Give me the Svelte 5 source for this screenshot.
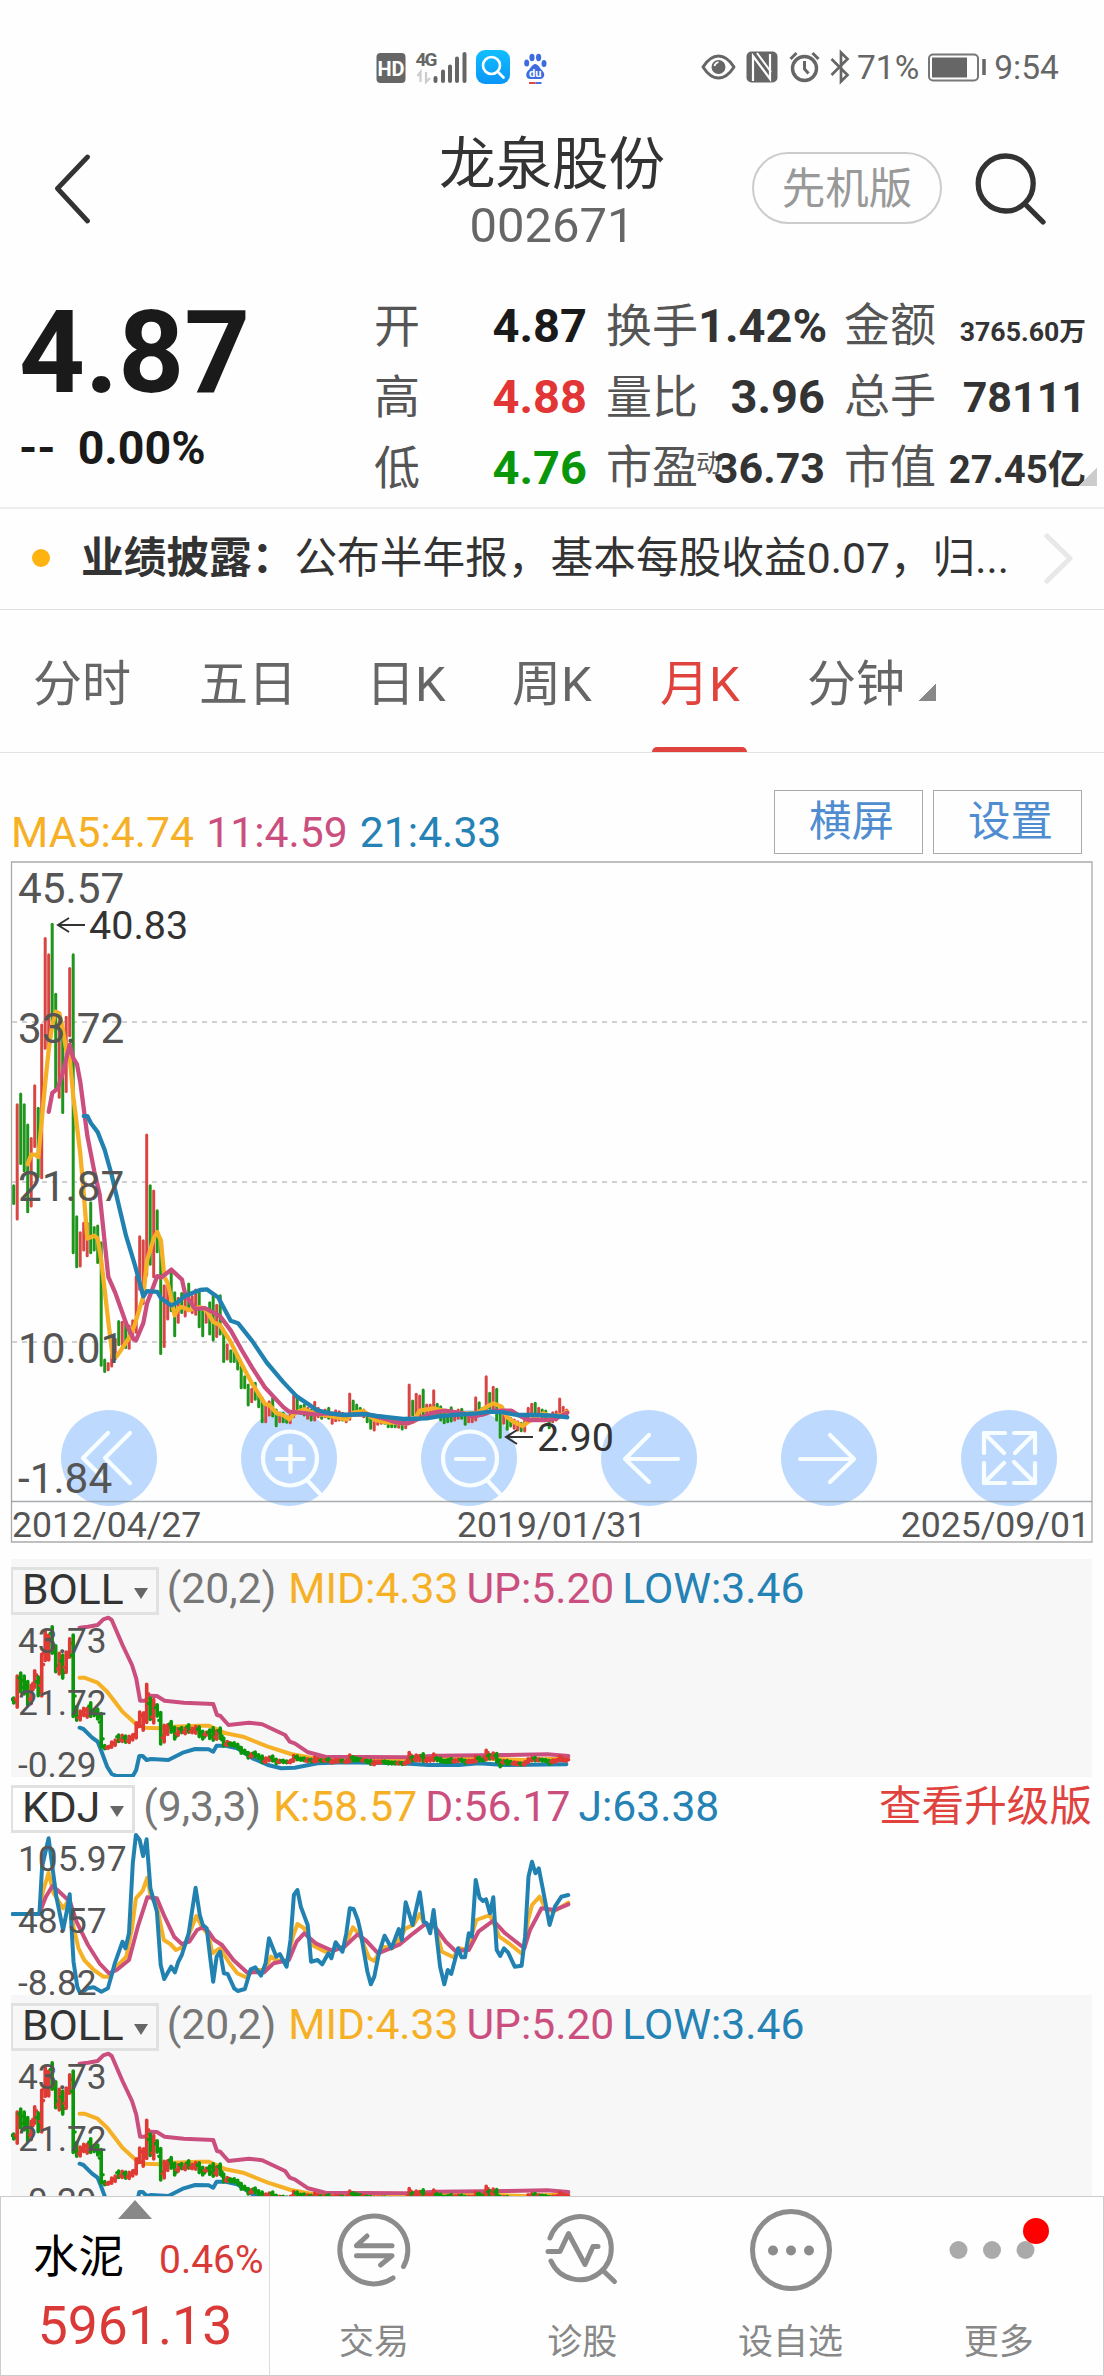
<script>
  const price = '4.87';
  const stats = [
    [
      { label: '开', value: '4.87', tone: 'ink' },
      { label: '高', value: '4.88', tone: 'up' },
      { label: '低', value: '4.76', tone: 'down' }
    ],
    [
      { label: '换手', value: '1.42%' },
      { label: '量比', value: '3.96' },
      { label: '市盈', value: '36.73', size: 'mid', mark: '动' }
    ],
    [
      { label: '金额', value: '3765.60万', size: 'tiny' },
      { label: '总手', value: '78111', size: 'mid' },
      { label: '市值', value: '27.45亿', size: 'small' }
    ]
  ];

  const tabs = [
    { id: 'minute', name: '分时' },
    { id: 'five', name: '五日' },
    { id: 'day', name: '日K' },
    { id: 'week', name: '周K' },
    { id: 'month', name: '月K' },
    { id: 'mins', name: '分钟' }
  ];
  const active = 'month';

  // Monthly bars: direction (r = up, g = down), high, low. The volatile first years
  // use 2.8 units per pixel, the quiet ones 3 units per pixel.
  const volatile = `g940-990 r713-1033 g683-878 g713-898 g770-1013 r808-997 r660-830 g723-915 r490-918 r248-555
    r293-550 g208-480 g404-670 r480-692 g500-735 r468-676 r332-520 g293-1128 g1027-1167 r1072-1165 r1045-1120
    r1045-1136 g988-1128 g1057-1120 g1053-1155 g1100-1443 g1428-1460 r1438-1455 r1390-1445 r1370-1425 g1320-1385
    r1322-1385 g1330-1393 r1333-1395 r1318-1370 r1195-1350 r1083-1230 r1094-1270 r798-1190 g940-1160 r955-1195
    g1010-1125 g1088-1410 r1220-1390 r1213-1313 g1180-1290 g1240-1360 r1255-1322 g1242-1295 r1250-1305 g1215-1290
    r1250-1295 r1232-1300 g1235-1335 g1280-1360 r1290-1322 g1268-1355 g1245-1372 r1275-1362 g1248-1355 g1350-1432
    r1385-1425 g1402-1432 g1400-1432 g1415-1453`;
  const quiet = `g800-863 g830-863 g855-915 r868-905 g850-898 g880-920 g895-965 r915-965 r905-945 g895-948 g930-977
    r940-965 g940-965 g950-967 r945-968 r888-950 g895-935 g918-940 g915-945 r925-955 g930-960 r907-960 r925-950
    g935-955 r930-950 g925-955 r945-970 r932-962 r935-960 g940-960 r945-965 r882-958 g903-945 g915-945 g925-945
    r930-950 g940-965 g945-985 r950-990 r950-973 r948-970 g950-970 g955-980 g960-980 g960-980 r960-982 g965-987
    r960-983 r855-965 g903-945 r883-945 r888-945 g870-955 r915-955 r915-950 r872-945 g913-945 g920-960 g940-968
    g935-965 g923-963 r935-960 r930-955 g928-955 g940-973 r940-965 r940-965 r893-960 g908-945 g925-945 r830-935
    g880-925 r862-925 g868-960 g940-1012 r945-970 g945-988 g955-978 r960-985 r965-990 g970-992 r960-993 r925-965
    r913-945 g910-945 r925-945 g930-950 g933-955 g945-983 r938-965 r935-960 r897-945 r922-945 r930-950`;

  const parseBars = (text, toY) =>
    text.trim().split(/\s+/).map((t) => {
      const [hi, lo] = t.slice(1).split('-').map(Number);
      return { up: t[0] === 'r', hi: toY(hi), lo: toY(lo) };
    });
  const bars = [
    ...parseBars(volatile, (v) => v / 2.8 + 850),
    ...parseBars(quiet, (v) => v / 3 + 1100)
  ].map((b, i) => ({ ...b, x: 13.7 + i * 3.5 }));

  const scalePts = (text, fx, fy) =>
    text.trim().split(/\s+/).map((p) => {
      const [x, y] = p.split(',').map(Number);
      return `${fx(x).toFixed(1)},${fy(y).toFixed(1)}`;
    }).join(' ');
  const average = (first, second) =>
    scalePts(first, (x) => x / 3, (y) => y / 2.8 + 850) + ' ' +
    scalePts(second, (x) => x / 3 + 200, (y) => y / 3 + 1100);

  const ma5 = average(
    '83,880 94,853 104,853 115,860 125,760 136,650 146,560 157,490 167,453 178,457 188,500 199,560 209,580 220,690 241,850 251,960 262,1088 283,1080 293,1088 304,1150 325,1320 338,1420 350,1418 388,1365 404,1330 430,1250 441,1150 462,1085 472,1070 483,1095 493,1195 504,1215 524,1303 535,1283 546,1280 567,1288 600,1280 620,1290 640,1322 660,1330 692,1378 725,1440 757,1495',
    '195,912 208,915 230,940 249,945 268,958 285,938 312,928 340,940 375,945 440,958 460,938 490,933 525,960 560,967 617,970 640,965 659,932 700,925 740,935 790,940 830,940 860,920 880,910 905,920 920,950 940,965 968,978 985,965 1010,950 1030,940 1055,950 1085,945 1102,935'
  );
  const ma11 = average(
    '146,733 157,680 173,668 188,625 209,545 220,583 231,600 241,650 262,800 283,900 299,965 325,1195 346,1240 380,1330 400,1368 408,1373 430,1325 441,1270 472,1193 483,1197 500,1185 514,1175 546,1203 556,1245 585,1285 615,1283 660,1305 692,1345 725,1400 757,1450 795,1505 850,1560',
    '268,935 300,938 345,943 385,940 440,945 500,942 560,958 590,968 625,970 660,955 700,938 735,932 790,940 820,950 860,940 880,932 935,932 955,945 985,960 1045,960 1070,955 1102,938'
  );
  const ma21 = average(
    '251,745 262,745 273,765 293,790 314,840 335,910 350,970 378,1080 404,1160 430,1250 441,1235 472,1237 483,1255 514,1275 530,1268 556,1248 600,1232 620,1230 655,1253 692,1318 714,1325 757,1375 800,1435 850,1490 890,1530 930,1555',
    '350,930 390,940 430,945 490,942 530,948 575,953 610,957 680,955 710,950 760,945 830,940 870,935 910,937 950,945 1010,945 1060,947 1102,952'
  );

  // Indicator panels, 2.613 units per pixel across and 3 down.
  const panelPts = (text, off) => scalePts(text, (x) => x / 2.613, (y) => y / 3 - off);
  const boll = {
    name: 'BOLL', params: '(20,2)', shaded: true, candles: true,
    axis: ['43.73', '21.72', '-0.29'],
    legend: [['gold', 'MID:4.33'], ['pink', 'UP:5.20'], ['blue', 'LOW:3.46']],
    lines: [
      ['gold', panelPts('208,383 220,383 255,398 280,425 320,485 356,523 380,533 415,535 450,530 520,527 545,527 590,550 635,560 700,590 760,612 820,625 900,630 1050,632 1150,625 1300,627 1370,630 1485,625', 9)],
      ['pink', panelPts('208,233 230,230 255,225 270,208 283,203 292,210 320,285 345,345 356,385 366,452 380,452 388,437 410,438 430,452 480,458 557,462 567,495 575,497 597,525 650,518 685,523 745,555 757,575 770,580 805,607 850,620 1065,622 1140,617 1320,615 1430,613 1485,618', 9)],
      ['blue', panelPts('208,533 218,537 240,562 255,575 262,595 280,650 292,672 305,678 347,678 356,660 364,618 373,618 383,630 395,627 440,630 480,607 510,597 545,598 557,605 566,587 590,587 620,595 660,625 700,645 735,655 770,653 830,640 900,637 1050,640 1120,645 1200,645 1250,640 1320,645 1480,643', 9)]
    ]
  };
  const kdj = {
    name: 'KDJ', params: '(9,3,3)', shaded: false, candles: false, link: '查看升级版',
    axis: ['105.97', '48.57', '-8.82'],
    legend: [['gold', 'K:58.57'], ['pink', 'D:56.17'], ['blue', 'J:63.38']],
    lines: [
      ['gold', panelPts('103,432 112,365 127,308 140,370 165,415 180,390 192,470 205,535 220,570 245,600 270,620 287,620 300,595 330,560 345,475 355,385 373,362 385,323 393,375 410,410 428,510 445,522 460,540 480,530 500,475 513,438 530,475 545,495 555,550 575,535 600,580 620,610 642,622 665,600 690,600 708,560 720,570 750,575 765,500 777,462 795,475 815,525 850,545 880,535 900,530 922,472 940,495 965,565 978,573 1000,530 1025,535 1045,505 1060,475 1080,465 1097,432 1110,465 1135,465 1155,545 1185,562 1200,535 1220,540 1245,450 1280,435 1305,500 1330,520 1365,553 1380,450 1390,405 1410,380 1425,415 1445,425 1485,398', 7)],
      ['pink', panelPts('103,430 120,380 137,348 150,360 183,395 200,455 230,525 260,580 285,610 305,600 337,570 360,470 385,382 410,385 430,440 455,500 475,522 495,515 515,480 530,472 545,485 560,510 580,525 610,570 645,607 690,607 715,580 755,570 775,515 795,490 825,520 870,543 900,530 935,493 955,510 988,550 1045,523 1080,490 1110,463 1135,468 1165,515 1190,543 1225,540 1250,485 1289,452 1320,490 1370,535 1385,480 1415,415 1450,420 1485,403', 7)],
      ['blue', panelPts('33,432 103,432 110,290 120,240 127,205 137,290 147,380 165,480 175,420 182,373 192,575 202,650 210,672 228,655 245,652 265,665 282,655 292,615 300,580 320,515 328,535 337,490 347,280 355,195 365,210 374,258 383,208 393,355 410,425 420,585 429,627 447,590 457,607 466,575 475,555 493,490 511,353 522,435 530,465 540,475 549,560 557,635 566,560 575,545 585,610 595,612 612,655 621,663 640,657 655,598 667,592 682,617 694,580 703,505 722,560 731,552 749,590 759,510 768,375 777,360 786,410 804,465 813,575 830,570 842,583 858,550 866,565 877,517 895,545 905,490 914,415 924,417 935,450 943,490 950,540 960,605 969,643 978,620 990,550 1005,497 1023,535 1042,477 1050,510 1060,397 1078,465 1097,367 1107,455 1115,460 1124,490 1133,420 1150,590 1161,643 1170,600 1179,612 1197,535 1206,562 1215,562 1225,490 1233,500 1243,330 1253,383 1262,393 1270,388 1280,430 1289,382 1298,540 1307,558 1317,535 1328,548 1345,590 1363,587 1372,500 1381,320 1390,275 1399,310 1408,295 1418,355 1436,465 1450,410 1467,380 1485,375', 7)]
    ]
  };
  const panels = [boll, kdj, boll];

  const squeeze = (y) => 67.7 + (y - 924.3) * 0.273;
  const smallBar = (b, i) => {
    const hi = squeeze(b.hi), lo = squeeze(b.lo), mid = (hi + lo) / 2;
    const a = b.up ? mid + (lo - mid) * 0.5 : mid - (mid - hi) * 0.5;
    return `M${b.x} ${hi}V${lo}M${b.x - 1.8} ${a}H${b.x}M${b.x} ${hi + lo - a}H${b.x + 1.8}`;
  };
</script>

<div class="page">
  <div class="status">
    <svg class="sys-left" viewBox="376 46 174 42">
      <rect x="376.5" y="53" width="29" height="30" rx="4" fill="#666" />
      <text x="391" y="75.500" class="hd">HD</text>
      <text x="415.500" y="66" class="net">4G</text>
      <path d="M420.500 82V72l-3 4M426 72v10l4-4" stroke="#ccc" stroke-width="2.200" fill="none" />
      <path d="M435.500 81V78M443 81V71.500M450 81V66.500M457 81V58.500M464.500 81V54" stroke="#666" stroke-width="4" stroke-linecap="round" />
      <defs>
        <linearGradient id="sky" x1="0" y1="0" x2="0" y2="1"><stop offset="0" stop-color="#10bfff" /><stop offset="1" stop-color="#0a95f8" /></linearGradient>
      </defs>
      <rect x="476" y="50" width="34" height="34" rx="9" fill="url(#sky)" />
      <circle cx="491.500" cy="65.500" r="8.500" fill="none" stroke="#fff" stroke-width="2.600" />
      <path d="M497.500 71.500l6 6" stroke="#fff" stroke-width="2.800" stroke-linecap="round" />
      <g fill="#3f6be0">
        <ellipse cx="526.700" cy="63" rx="2.500" ry="3.600" />
        <ellipse cx="532" cy="57.500" rx="2.600" ry="3.700" />
        <ellipse cx="538.600" cy="57.500" rx="2.600" ry="3.700" />
        <ellipse cx="544" cy="63.500" rx="2.500" ry="3.600" />
        <path d="M535.200 64c3 0 4.500 4 7 6.500 4 4 1.500 8.500-2 8.500h-10c-4 0-5.500-5-2-8.500 2.800-2.500 4-6.500 7-6.500z" />
      </g>
      <text x="535.200" y="76.500" class="du">du</text>
      <path d="M529 83h6.500" stroke="#e04848" stroke-width="2" /><path d="M535.500 83h6" stroke="#4a72e0" stroke-width="2" />
    </svg>
    <svg class="sys-right" viewBox="700 46 154 42">
      <path d="M703 67q7-11 15.500-11t15.500 11q-7 11-15.500 11t-15.500-11z" fill="none" stroke="#666" stroke-width="3" stroke-linejoin="round" />
      <circle cx="718.500" cy="67" r="7" fill="#666" /><path d="M714.500 66q.5-3 4-4" stroke="#fff" stroke-width="1.800" fill="none" />
      <rect x="746.500" y="51.500" width="31" height="31" rx="5" fill="#666" />
      <path d="M753 81V56l17 23V54" fill="none" stroke="#fff" stroke-width="2.200" />
      <path d="M757 53l14 19" stroke="#fff" stroke-width="2" />
      <circle cx="804.500" cy="68.500" r="12" fill="none" stroke="#666" stroke-width="3.400" />
      <path d="M804.500 61v8l4 4.500M790.500 59l6-6M818.500 59l-6-6" fill="none" stroke="#666" stroke-width="3" />
      <path d="M831.500 59l16 16-6.500 6.500v-29l6.500 6.500-16 16" fill="none" stroke="#666" stroke-width="2.700" />
    </svg>
    <span class="sys-text">71%</span>
    <svg class="battery" viewBox="927 50 60 34">
      <rect x="929" y="54.500" width="49" height="26" rx="4" fill="none" stroke="#777" stroke-width="2" />
      <rect x="932" y="57.500" width="35" height="20" fill="#666" />
      <path d="M984 59v16" stroke="#666" stroke-width="3.500" />
    </svg>
    <span class="sys-text">9:54</span>
  </div>

  <header class="title-bar">
    <svg class="back" viewBox="0 0 40 70"><path d="M34.500 3L4.500 34.500 34.500 67" fill="none" stroke="#333" stroke-width="4.800" stroke-linecap="round" stroke-linejoin="round" /></svg>
    <div class="names">
      <h1>龙泉股份</h1>
      <p>002671</p>
    </div>
    <div class="edition">先机版</div>
    <svg class="search" viewBox="974 152 72 74">
      <circle cx="1005.700" cy="183.500" r="27.500" fill="none" stroke="#333" stroke-width="5.300" />
      <path d="M1025.500 204.500l17.500 17.500" stroke="#333" stroke-width="5.300" stroke-linecap="round" />
    </svg>
  </header>

  <section class="quote">
    <div class="last">
      <strong>{price}</strong>
      <div class="change"><span>--</span><span>0.00%</span></div>
    </div>
    {#each stats as column}
      <div class="column">
        {#each column as s}
          <div class="stat">
            <span class="label">{s.label}{#if s.mark}<sup>{s.mark}</sup>{/if}</span>
            <b class="{s.tone ?? ''} {s.size ?? ''}">{s.value}</b>
          </div>
        {/each}
      </div>
    {/each}
    <i class="fold"></i>
  </section>

  <section class="news">
    <i class="dot"></i>
    <b>业绩披露：</b><span>公布半年报，基本每股收益0.07，归...</span>
    <svg viewBox="0 0 32 52"><path d="M4 4l23 22.500L4 49" fill="none" stroke="#e8e8e8" stroke-width="5" stroke-linecap="round" stroke-linejoin="round" /></svg>
  </section>

  <nav class="tabs">
    {#each tabs as t}
      <div class="tab {t.id}" class:active={t.id === active}>{t.name}{#if t.id === 'mins'}<i class="corner"></i>{/if}</div>
    {/each}
  </nav>

  <div class="averages">
    <p><span class="gold">MA5:4.74</span> <span class="pink">11:4.59</span> <span class="blue">21:4.33</span></p>
    <button>横屏</button>
    <button>设置</button>
  </div>

  <svg class="chart" viewBox="0 856 1104 703">
    <g fill="#bddafe">
      {#each [109, 289, 469, 649, 829, 1009] as cx}<circle {cx} cy="1458" r="48" />{/each}
    </g>
    <g fill="none" stroke="#f8fdff" stroke-width="4.200" stroke-linecap="round" stroke-linejoin="round">
      <path d="M108 1433l-25 25 25 25M130 1433l-25 25 25 25" />
      <circle cx="290" cy="1458.500" r="27" /><path d="M307 1480l13 14M277 1459h27M290.500 1446v26" />
      <circle cx="470" cy="1458.500" r="27" /><path d="M487 1480l13 14M456 1459h28" />
      <path d="M649 1435l-24 24 24 23M625 1459h53" />
      <path d="M830 1435l24 24-24 23M854 1459h-54" />
      <path d="M1005 1433h-21v20M984 1433l20 20M1014 1433h21v20M1035 1433l-20 20M1005 1483h-21v-20M984 1483l20 -20M1014 1483h21v-20M1035 1483l-21 -21" />
    </g>
    <path d="M11.500 862V1542H1092V862z" fill="none" stroke="#aaa" stroke-width="1.300" />
    <path d="M11.500 1501.500H1092" stroke="#8a9096" stroke-opacity=".75" stroke-width="1.300" />
    <path d="M12 1022H1092M12 1182H1092M12 1342H1092" stroke="#d0d0d0" stroke-width="1.800" stroke-dasharray="5 5" />
    <g fill="none" stroke-width="3" stroke-linecap="round">
      {#each bars as b}
        <path class={b.up ? 'bar-up' : 'bar-down'} d="M{b.x} {b.hi}V{b.lo}" />
      {/each}
    </g>
    <g fill="none" stroke-width="4.300" stroke-linejoin="round" stroke-linecap="round">
      <polyline points={ma5} class="s-gold" />
      <polyline points={ma11} class="s-pink" />
      <polyline points={ma21} class="s-blue" />
    </g>
    <g class="axis">
      <text x="18" y="903">45.57</text>
      <text x="18" y="1043">33.72</text>
      <text x="18" y="1201">21.87</text>
      <text x="18" y="1363">10.01</text>
      <text x="18" y="1493">-1.84</text>
    </g>
    <g class="dates">
      <text x="12" y="1537">2012/04/27</text>
      <text x="457" y="1537">2019/01/31</text>
      <text x="1090" y="1537" text-anchor="end">2025/09/01</text>
    </g>
    <g class="marks">
      <path d="M85 925H58M69 918l-11 7 11 7M533 1437H506M517 1430l-11 7 11 7" />
      <text x="89" y="938.500">40.83</text>
      <text x="537" y="1450.500">2.90</text>
    </g>
  </svg>

  <div class="panels">
    {#each panels as p}
      <section class="panel" class:shaded={p.shaded}>
        <svg class="plot" viewBox="11 0 1081 218">
          <g fill="none" stroke-width="4" stroke-linejoin="round" stroke-linecap="round">
            {#each p.lines as [tone, pts]}<polyline class="s-{tone}" points={pts} />{/each}
          </g>
          {#if p.candles}
            <g fill="none" stroke-width="3.600" stroke-linecap="round">
              {#each bars as b, i}<path class={b.up ? 'tick-up' : 'tick-down'} d={smallBar(b, i)} />{/each}
            </g>
          {/if}
          <g class="scale">
            {#each p.axis as a, i}<text x="18" y={93.7 + i * 62}>{a}</text>{/each}
          </g>
        </svg>
        <div class="legend">
          <span class="picker">{p.name}<i></i></span>
          <span class="params">{p.params}</span>
          {#each p.legend as [tone, text]}<span class={tone}>{text}</span>{/each}
          {#if p.link}<a class="upgrade">{p.link}</a>{/if}
        </div>
      </section>
    {/each}
  </div>

  <footer>
    <div class="sector">
      <i class="lift"></i>
      <div class="sector-row"><span>水泥</span><em>0.46%</em></div>
      <strong>5961.13</strong>
    </div>
    <div class="action">
      <svg viewBox="330 2204 90 90" class="line">
        <path d="M404.500 2266.500A34 34 0 1 0 394 2278" />
        <path d="M393 2245.700H357.500L368 2236M357.500 2255.700H393L381.500 2265" />
      </svg>
      <span>交易</span>
    </div>
    <div class="action">
      <svg viewBox="537 2204 90 90" class="line">
        <path d="M550 2238A31.500 31.500 0 1 1 551 2261M604.500 2272l10 9.500" />
        <path d="M548 2251.500h12l8.500-18 16.500 31 8-18h5" />
      </svg>
      <span>诊股</span>
    </div>
    <div class="action">
      <svg viewBox="745 2204 90 90" class="line">
        <circle cx="790" cy="2250" r="38.500" />
        <g fill="#8c8c8c" stroke="none"><circle cx="772" cy="2250.500" r="5" /><circle cx="790" cy="2250.500" r="5" /><circle cx="808" cy="2250.500" r="5" /></g>
      </svg>
      <span>设自选</span>
    </div>
    <div class="action">
      <svg viewBox="954 2204 90 90" overflow="visible">
        <g fill="#aaa"><circle cx="958.500" cy="2250" r="9" /><circle cx="992" cy="2250" r="9" /><circle cx="1025.500" cy="2250" r="9" /></g>
        <circle cx="1036" cy="2231" r="13" fill="#f00" />
      </svg>
      <span>更多</span>
    </div>
  </footer>
</div>

<style>
  :global(body) { background: #fdfdfd; }
  .page {
    width: 1104px; height: 2376px; overflow: hidden; display: flex; flex-direction: column;
    font-family: Roboto, "Noto Sans CJK SC", sans-serif; color: #333; background: #fefefe;
  }
  .page * { box-sizing: border-box; }
  svg { display: block; flex: none; }
  h1, p { margin: 0; font-weight: 400; }

  .status { height: 110px; padding: 46px 0 0 376px; display: flex; align-items: flex-start; flex: none; }
  .sys-left { width: 174px; height: 42px; margin-right: 150px; }
  .sys-right { width: 154px; height: 42px; margin-right: 3px; }
  .battery { width: 60px; height: 34px; margin: 4px 7px 0 8px; }
  .sys-text { font-size: 33.500px; line-height: 44px; color: #666; white-space: nowrap; }
  .hd { font-size: 20px; font-weight: 700; fill: #fff; text-anchor: middle; }
  .net { font-size: 19px; font-weight: 700; fill: #666; letter-spacing: -2px; }
  .du { font-size: 11px; font-weight: 700; fill: #fff; text-anchor: middle; }

  .title-bar { height: 160px; flex: none; display: flex; align-items: flex-start; padding-left: 53px; }
  .back { width: 40px; height: 70px; margin: 44px 346px 0 0; }
  .names { width: 226px; text-align: center; margin-top: 18px; }
  h1 { font-size: 56.5px; line-height: 74px; white-space: nowrap; }
  .names p { font-size: 49px; line-height: 50px; color: #666; margin-top: -1px; }
  .edition {
    width: 190px; height: 72px; margin: 42px 0 0 87px; border: 2px solid #ccc; border-radius: 36px;
    font-size: 43.5px; line-height: 71px; text-align: center; color: #999;
  }
  .search { width: 72px; height: 74px; margin: 42px 0 0 32px; }

  .quote { position: relative; height: 239px; flex: none; border-bottom: 2px solid #eee; display: flex; padding: 20px 18px 0 19px; gap: 19px; }
  .last { width: 336px; color: #1a1a1a; }
  .last strong { display: block; font-size: 115px; line-height: 120px; margin-top: 3px; }
  .change { display: flex; gap: 22px; font-size: 46.5px; font-weight: 700; line-height: 50px; margin-top: 10px; }
  .column { width: 219px; }
  .column:nth-child(2) { width: 213px; }
  .column:nth-child(4) { width: 242px; }
  .stat { height: 71px; display: flex; justify-content: space-between; align-items: baseline; white-space: nowrap; line-height: 71px; }
  .label { position: relative; font-size: 46px; color: #555; }
  .label sup { position: absolute; left: 90px; top: 0; font-size: 25px; line-height: 64px; }
  .stat b { font-size: 47px; position: relative; }
  .stat b.mid { font-size: 43px; }
  .stat b.small { font-size: 38.3px; }
  .stat b.tiny { font-size: 26.7px; }
  .ink { color: #1a1a1a; }
  .up { color: #e23535; }
  .down { color: #0a960a; }
  .fold { position: absolute; right: 7px; bottom: 21px; width: 18px; height: 18px; background: linear-gradient(135deg, transparent 50%, #ccc 50%); }

  .news { height: 101px; flex: none; border-bottom: 1px solid #e2e2e2; display: flex; align-items: center; padding-left: 32px; font-size: 42.7px; line-height: 60px; padding-bottom: 2px; white-space: nowrap; }
  .dot { width: 18px; height: 18px; border-radius: 50%; background: #ffb310; margin-right: 31px; }
  .news span { width: 749px; }
  .news svg { width: 32px; height: 52px; }

  .tabs { height: 143px; flex: none; display: flex; border-bottom: 1.500px solid #e2e2e2; padding-left: 33px; font-size: 49px; line-height: 150px; color: #666; }
  .tab { position: relative; white-space: nowrap; width: 166px; }
  .tab.five { width: 167px; }
  .tab.day { width: 146px; }
  .tab.week { width: 148px; }
  .tab.month { width: 147px; }
  .tab.active { color: #e0433e; }
  .tab.active::after { content: ''; position: absolute; left: -8px; bottom: 0; width: 95px; height: 5px; border-radius: 5px 5px 0 0; background: #e0433e; }
  .corner { display: inline-block; width: 18px; height: 18px; margin-left: 13px; background: linear-gradient(135deg, transparent 50%, #888 50%); }

  .averages { height: 103px; flex: none; display: flex; align-items: flex-start; padding: 37px 22px 0 11px; }
  .averages p { flex: 1; font-size: 42.700px; line-height: 50px; margin-top: 17px; white-space: nowrap; word-spacing: 1.500px; }
  .averages button {
    width: 149px; height: 64px; margin-left: 10px; padding: 0 0 0 6px; border: 1.500px solid #aaa; background: none;
    font: inherit; font-size: 42.5px; line-height: 60px; color: #4f8dd0;
  }
  .gold { color: #f6b026; }
  .pink { color: #cb4f7e; }
  .blue { color: #2482b4; }

  .chart { width: 1104px; height: 703px; }
  .s-gold { stroke: #f6b026; }
  .s-pink { stroke: #cb4f7e; }
  .s-blue { stroke: #2182b2; }
  .bar-up { stroke: #d84543; }
  .bar-down { stroke: #1d961b; }
  .tick-up { stroke: #e03a34; }
  .tick-down { stroke: #0c960a; }
  .axis text { font-size: 42.300px; fill: #555; }
  .dates text { font-size: 35.600px; fill: #555; }
  .marks text { font-size: 39.5px; fill: #333; }
  .marks path { fill: none; stroke: #333; stroke-width: 2; }

  .panels { height: 637px; flex: none; overflow: hidden; padding: 0 12px 0 11px; }
  .panel { position: relative; height: 218px; }
  .panel.shaded { background: #f7f7f7; }
  .plot { position: absolute; left: 0; top: 0; width: 1081px; height: 218px; }
  .scale text { font-size: 35.300px; fill: #555; }
  .legend { position: relative; display: flex; align-items: flex-start; padding-top: 8px; font-size: 42.600px; line-height: 42px; white-space: nowrap; }
  .picker { display: flex; height: 48px; border: 3px solid #dfe2df; border-left-width: 2px; padding: 0 8px 4px 9px; align-items: center; margin-right: 8px; }
  .picker i { margin: 9px 0 0 10px; border: 7.500px solid transparent; border-top: 11px solid #666; border-bottom: 0; }
  .legend > span { line-height: 42px; }
  .params { color: #777; margin-right: 12px; }
  .params ~ span { margin-right: 8px; }
  .upgrade { margin-left: auto; color: #e0433e; }

  footer { height: 180px; flex: none; display: flex; background: #fefefe; border: 1.500px solid #ccc; }
  .sector { width: 269px; border-right: 1.500px solid #ddd; display: flex; flex-direction: column; align-items: center; color: #d93a38; }
  .lift { margin-top: 3px; border: 17.500px solid transparent; border-bottom: 19px solid #888; border-top: 0; }
  .sector-row { display: flex; align-items: baseline; line-height: 60px; margin-top: 9px; font-size: 45.5px; width: 100%; padding-left: 32px; }
  .sector-row span { color: #000; width: 126px; }
  .sector-row em { font-style: normal; font-size: 39px; }
  .sector strong { font-weight: 400; font-size: 53.500px; line-height: 60px; margin-top: 6px; }
  .action { flex: 1; display: flex; flex-direction: column; align-items: center; color: #888; font-size: 35px; line-height: 44px; }
  .action svg { width: 90px; height: 90px; margin-top: 7px; }
  .action span { margin-top: 27px; }
  .line { fill: none; stroke: #8c8c8c; stroke-width: 5px; stroke-linecap: round; stroke-linejoin: round; }
</style>
